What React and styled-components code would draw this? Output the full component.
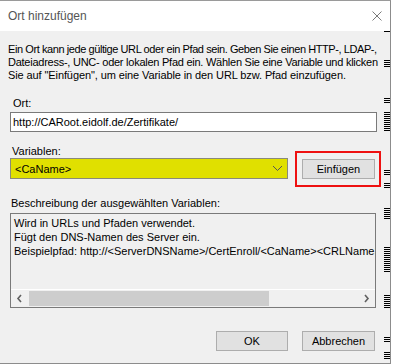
import React from "react";
import styled, { createGlobalStyle } from "styled-components";

const Global = createGlobalStyle`
  html, body { margin: 0; padding: 0; background: #ffffff; }
  body { font-family: "Liberation Sans", Arial, sans-serif; font-size: 11px; color: #000; }
  * { box-sizing: border-box; }
`;

const Page = styled.div`
  position: relative;
  width: 393px;
  height: 364px;
  background: #ffffff;
  overflow: hidden;
`;

const Window = styled.div`
  width: 391px;
  height: 364px;
  border-top: 1px solid #9a9a9a;
  border-right: 1px solid #8c8c8c;
  border-bottom: 1px solid #8c8c8c;
  display: flex;
  flex-direction: column;
  background: #f0f0f0;
  overflow: hidden;
`;

const TitleBar = styled.div`
  height: 30px;
  flex: none;
  background: #ffffff;
  display: flex;
  align-items: center;
  justify-content: space-between;
  padding: 0 8px 0 8px;
`;

const Title = styled.span`
  font-size: 12px;
  color: #555555;
`;

const Close = styled.svg`
  width: 10px;
  height: 10px;
`;

const Body = styled.div`
  flex: 1;
  padding: 12px 14px 0 8px;
  display: flex;
  flex-direction: column;
`;

const Intro = styled.div`
  display: flex;
  flex-direction: column;
  width: 378px;
  overflow: hidden;
`;

const IntroLine = styled.span`
  line-height: 13px;
  letter-spacing: ${(p) => p.$ls}px;
  white-space: nowrap;
`;

const Label = styled.div`
  line-height: 13px;
  padding-left: ${(p) => p.$indent || 3}px;
  margin-top: ${(p) => p.$top}px;
`;

const TextInput = styled.div`
  margin: 2px 0 0 2px;
  width: 367px;
  height: 20px;
  background: #ffffff;
  border: 1px solid #7a7a7a;
  padding: 0 2px;
  display: flex;
  align-items: center;
  white-space: nowrap;
`;

const VarRow = styled.div`
  margin: 0 0 0 2px;
  display: flex;
  align-items: flex-start;
`;

const Select = styled.div`
  width: 278px;
  height: 21px;
  background: #e0e000;
  border: 1px solid #8a8a7a;
  display: flex;
  align-items: center;
  justify-content: space-between;
  padding: 0 4px 0 4px;
`;

const Highlight = styled.div`
  position: relative;
  margin-left: 14px;
  margin-top: 1px;
  &::after {
    content: "";
    position: absolute;
    left: -7px;
    top: -8px;
    right: -6px;
    bottom: -8px;
    border: 2px solid #ee1111;
    pointer-events: none;
  }
`;

const Button = styled.div`
  width: ${(p) => p.$w || 73}px;
  height: 20px;
  background: #e1e1e1;
  border: 1px solid #adadad;
  display: flex;
  align-items: center;
  justify-content: center;
`;

const TextArea = styled.div`
  margin: 3px 0 0 2px;
  width: 366px;
  height: 95px;
  border: 1px solid #7a7a7a;
  background: #f0f0f0;
  display: flex;
  flex-direction: column;
`;

const AreaText = styled.div`
  flex: 1;
  padding: 2px 0 0 3px;
  line-height: 14px;
  white-space: nowrap;
  overflow: hidden;
`;

const HScroll = styled.div`
  height: 18px;
  flex: none;
  display: flex;
  align-items: center;
  background: #f0f0f0;
  border-top: 1px solid #ffffff;
`;

const Arrow = styled.svg`
  width: 17px;
  height: 17px;
  flex: none;
`;

const Track = styled.div`
  flex: 1;
  height: 15px;
  display: flex;
`;

const Thumb = styled.div`
  width: 240px;
  height: 15px;
  margin-left: 1px;
  background: #cdcdcd;
`;

const Footer = styled.div`
  margin-top: 23px;
  display: flex;
  justify-content: flex-end;
  gap: 14px;
  padding-right: 1px;
`;

const Mark = styled.div`
  position: absolute;
  left: 384px;
  width: 6px;
  background: repeating-linear-gradient(to bottom, #000 0 1px, transparent 1px 2px);
`;

const marks = [
  [31, 1], [60, 7], [98, 5], [112, 20], [170, 5], [183, 5],
  [208, 12], [247, 25], [295, 13], [337, 6], [352, 8],
];

export default function App() {
  return (
    <Page>
      <Global />
      <Window>
        <TitleBar>
          <Title>Ort hinzufügen</Title>
          <Close viewBox="0 0 10 10">
            <path d="M0.5 0.5 L9.5 9.5 M9.5 0.5 L0.5 9.5" stroke="#7a7a7a" strokeWidth="1" fill="none" />
          </Close>
        </TitleBar>
        <Body>
          <Intro>
            <IntroLine $ls={-0.42}>
              Ein Ort kann jede gültige URL oder ein Pfad sein. Geben Sie einen HTTP-, LDAP-,
            </IntroLine>
            <IntroLine $ls={-0.25}>
              Dateiadress-, UNC- oder lokalen Pfad ein. Wählen Sie eine Variable und klicken
            </IntroLine>
            <IntroLine $ls={-0.1}>
              Sie auf "Einfügen", um eine Variable in den URL bzw. Pfad einzufügen.
            </IntroLine>
          </Intro>
          <Label $top={15} $indent={5}>Ort:</Label>
          <TextInput>http://CARoot.eidolf.de/Zertifikate/</TextInput>
          <Label $top={13} $indent={4}>Variablen:</Label>
          <VarRow>
            <Select>
              <span>&lt;CaName&gt;</span>
              <svg width="11" height="7" viewBox="0 0 11 7">
                <path d="M1 1 L5.5 5.5 L10 1" stroke="#555" strokeWidth="1" fill="none" />
              </svg>
            </Select>
            <Highlight>
              <Button>Einfügen</Button>
            </Highlight>
          </VarRow>
          <Label $top={18} $indent={3}>Beschreibung der ausgewählten Variablen:</Label>
          <TextArea>
            <AreaText>
              Wird in URLs und Pfaden verwendet.
              <br />
              Fügt den DNS-Namen des Server ein.
              <br />
              Beispielpfad: http://&lt;ServerDNSName&gt;/CertEnroll/&lt;CaName&gt;&lt;CRLNameSuffix&gt;&lt;DeltaCRLAllowed&gt;.crl
            </AreaText>
            <HScroll>
              <Arrow viewBox="0 0 17 17">
                <path d="M10 5 L7 8.5 L10 12" stroke="#606060" strokeWidth="1.6" fill="none" />
              </Arrow>
              <Track>
                <Thumb />
              </Track>
              <Arrow viewBox="0 0 17 17">
                <path d="M7 5 L10 8.5 L7 12" stroke="#606060" strokeWidth="1.6" fill="none" />
              </Arrow>
            </HScroll>
          </TextArea>
          <Footer>
            <Button $w={72}>OK</Button>
            <Button $w={73}>Abbrechen</Button>
          </Footer>
        </Body>
      </Window>
      {marks.map(([top, h]) => (
        <Mark key={top} style={{ top, height: h }} />
      ))}
    </Page>
  );
}
